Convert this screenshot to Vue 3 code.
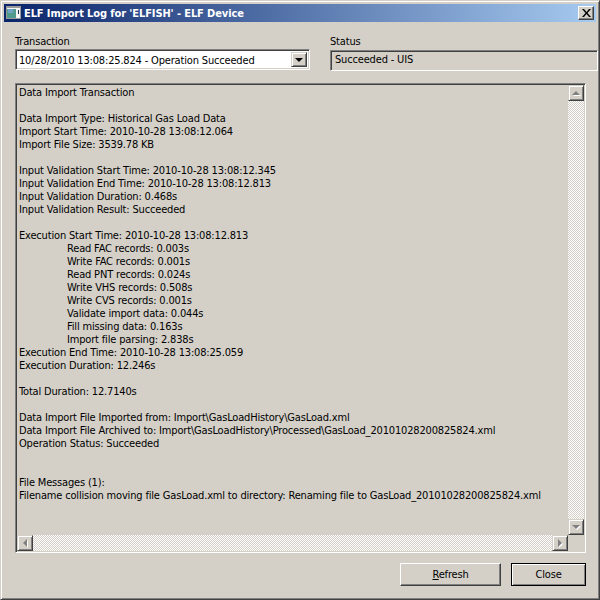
<template>
  <div class="ventana">
    <div class="titulo">
      <svg class="titulo-icono" width="16" height="14" viewBox="0 0 16 14">
        <rect x="0" y="0" width="15" height="13" fill="#9a9a9a" />
        <rect x="1" y="2" width="13" height="10" fill="#f4f4f4" />
        <rect x="1" y="3" width="9" height="9" fill="#4f9a8c" />
        <rect x="2" y="3" width="5" height="4" fill="#6fa3c4" />
        <rect x="12" y="4" width="1" height="4" fill="#1c2c50" />
      </svg>
      <span class="titulo-texto">ELF Import Log for 'ELFISH' - ELF Device</span>
      <button class="btn-cerrar">
        <svg width="9" height="8" viewBox="0 0 9 8">
          <path d="M0 0h2l2.500 3L7 0h2L5.500 4 9 8H7L4.500 5 2 8H0l3.500-4z" fill="#000" />
        </svg>
      </button>
    </div>

    <div class="cuerpo">
      <div class="fila-campos">
        <div class="campo-transaccion">
          <label class="etiqueta">Transaction</label>
          <div class="combo">
            <span class="combo-texto">10/28/2010 13:08:25.824 - Operation Succeeded</span>
            <span class="combo-btn"><i class="flecha-abajo negra"></i></span>
          </div>
        </div>
        <div class="campo-estado">
          <label class="etiqueta">Status</label>
          <div class="estado">Succeeded - UIS</div>
        </div>
      </div>

      <div class="log">
        <div class="log-fila">
          <div class="log-texto">
            <div v-for="(l, i) in lineas" :key="i" :class="['linea', l.startsWith('\t') ? 'sangria' : '']">{{ l.trim() }}</div>
          </div>
          <div class="barra-v">
            <span class="btn-barra"><i class="flecha-arriba"></i></span>
            <span class="pista"></span>
            <span class="btn-barra"><i class="flecha-abajo"></i></span>
          </div>
        </div>
        <div class="barra-h">
          <span class="btn-barra"><i class="flecha-izq"></i></span>
          <span class="pista"></span>
          <span class="btn-barra"><i class="flecha-der"></i></span>
          <span class="esquina"></span>
        </div>
      </div>

      <div class="botones">
        <button class="btn btn-refresh"><u>R</u>efresh</button>
        <button class="btn btn-close">Close</button>
      </div>
    </div>
  </div>
</template>

<script setup>
const lineas = [
  'Data Import Transaction',
  '',
  'Data Import Type: Historical Gas Load Data',
  'Import Start Time: 2010-10-28 13:08:12.064',
  'Import File Size: 3539.78 KB',
  '',
  'Input Validation Start Time: 2010-10-28 13:08:12.345',
  'Input Validation End Time: 2010-10-28 13:08:12.813',
  'Input Validation Duration: 0.468s',
  'Input Validation Result: Succeeded',
  '',
  'Execution Start Time: 2010-10-28 13:08:12.813',
  '\tRead FAC records: 0.003s',
  '\tWrite FAC records: 0.001s',
  '\tRead PNT records: 0.024s',
  '\tWrite VHS records: 0.508s',
  '\tWrite CVS records: 0.001s',
  '\tValidate import data: 0.044s',
  '\tFill missing data: 0.163s',
  '\tImport file parsing: 2.838s',
  'Execution End Time: 2010-10-28 13:08:25.059',
  'Execution Duration: 12.246s',
  '',
  'Total Duration: 12.7140s',
  '',
  'Data Import File Imported from: Import\\GasLoadHistory\\GasLoad.xml',
  'Data Import File Archived to: Import\\GasLoadHistory\\Processed\\GasLoad_20101028200825824.xml',
  'Operation Status: Succeeded',
  '',
  '',
  'File Messages (1):',
  'Filename collision moving file GasLoad.xml to directory: Renaming file to GasLoad_20101028200825824.xml',
]
</script>

<style>
html, body { margin: 0; padding: 0; background: #d4d0c8; }
</style>

<style scoped>
.ventana {
  width: 600px;
  height: 600px;
  box-sizing: border-box;
  background: #d4d0c8;
  border: 1px solid;
  border-color: #d4d0c8 #404040 #404040 #d4d0c8;
  box-shadow: inset 1px 1px 0 #fff, inset -1px -1px 0 #808080;
  padding: 3px;
  display: flex;
  flex-direction: column;
  font-family: "DejaVu Sans Condensed", "DejaVu Sans", sans-serif;
  font-stretch: condensed;
  font-size: 11px;
  letter-spacing: -0.17px;
  color: #000;
  overflow: hidden;
}

.titulo {
  height: 18px;
  flex-shrink: 0;
  display: flex;
  align-items: center;
  padding: 0 2px;
  background: linear-gradient(to right, #0a246a, #a6caf0);
  color: #fff;
}
.titulo-icono { margin-right: 2px; }
.titulo-texto { font-weight: 700; flex: 1; letter-spacing: -0.1px; }

.btn-cerrar {
  width: 16px;
  height: 14px;
  padding: 0;
  border: 1px solid;
  border-color: #fff #404040 #404040 #fff;
  box-shadow: inset -1px -1px 0 #808080;
  background: #d4d0c8;
  display: flex;
  align-items: center;
  justify-content: center;
}

.cuerpo {
  flex: 1;
  display: flex;
  flex-direction: column;
  padding: 13px 10px 10px 11px;
  min-height: 0;
}

.fila-campos { display: flex; gap: 20px; margin-right: -12px; }
.campo-transaccion { width: 295px; flex-shrink: 0; }
.campo-estado { flex: 1; }
.etiqueta { display: block; height: 14px; line-height: 13px; }

.combo {
  height: 21px;
  box-sizing: border-box;
  background: #fff;
  border: 1px solid;
  border-color: #808080 #fff #fff #808080;
  box-shadow: inset 1px 1px 0 #404040, inset -1px -1px 0 #d4d0c8;
  display: flex;
  align-items: center;
  justify-content: space-between;
  padding: 2px;
}
.combo-texto { padding: 1px 0 0 1px; }
.combo-btn {
  width: 16px;
  height: 15px;
  box-sizing: border-box;
  background: #d4d0c8;
  border: 1px solid;
  border-color: #d4d0c8 #404040 #404040 #d4d0c8;
  box-shadow: inset 1px 1px 0 #fff, inset -1px -1px 0 #808080;
  display: flex;
  align-items: center;
  justify-content: center;
}

.estado {
  height: 21px;
  margin-top: 1px;
  box-sizing: border-box;
  border: 1px solid;
  border-color: #808080 #fff #fff #808080;
  box-shadow: inset 1px 1px 0 #404040;
  padding: 1px 4px;
  line-height: 15px;
}

.log {
  margin-top: 12px;
  flex: 1;
  min-height: 0;
  display: flex;
  flex-direction: column;
  border: 1px solid;
  border-color: #808080 #fff #fff #808080;
  box-shadow: inset 1px 1px 0 #404040;
  padding: 1px 1px 1px 1px;
}
.log-fila { flex: 1; display: flex; min-height: 0; }
.log-texto { flex: 1; padding: 1px 2px 0 2px; min-width: 0; }
.linea { height: 13px; line-height: 13px; white-space: nowrap; }
.sangria { padding-left: 48px; }

.barra-v { width: 16px; display: flex; flex-direction: column; }
.barra-h { height: 16px; display: flex; }
.pista {
  flex: 1;
  background-color: #fff;
  background-image: conic-gradient(#d4d0c8 25%, #fff 0 50%, #d4d0c8 0 75%, #fff 0);
  background-size: 2px 2px;
}
.esquina { width: 16px; background: #d4d0c8; }

.btn-barra {
  width: 16px;
  height: 16px;
  box-sizing: border-box;
  flex-shrink: 0;
  background: #d4d0c8;
  border: 1px solid;
  border-color: #d4d0c8 #404040 #404040 #d4d0c8;
  box-shadow: inset 1px 1px 0 #fff, inset -1px -1px 0 #808080;
  display: flex;
  align-items: center;
  justify-content: center;
}

i { display: block; width: 0; height: 0; filter: drop-shadow(1px 1px 0 #fff); }
.flecha-abajo { border: 4px solid transparent; border-top-color: #808080; border-bottom: 0; }
.flecha-abajo.negra { border-top-color: #000; filter: none; }
.flecha-arriba { border: 4px solid transparent; border-bottom-color: #808080; border-top: 0; }
.flecha-izq { border: 4px solid transparent; border-right-color: #808080; border-left: 0; }
.flecha-der { border: 4px solid transparent; border-left-color: #808080; border-right: 0; }

.botones { display: flex; justify-content: flex-end; gap: 10px; margin-top: 10px; }
.btn {
  height: 23px;
  box-sizing: border-box;
  padding: 0;
  font: inherit;
  letter-spacing: inherit;
  color: #000;
  background: #d4d0c8;
  border: 1px solid;
  border-color: #fff #404040 #404040 #fff;
  box-shadow: inset -1px -1px 0 #808080;
}
.btn-refresh { width: 101px; }
.btn-close {
  width: 75px;
  border-color: #000;
  box-shadow: inset 1px 1px 0 #fff, inset -1px -1px 0 #808080;
}
</style>
